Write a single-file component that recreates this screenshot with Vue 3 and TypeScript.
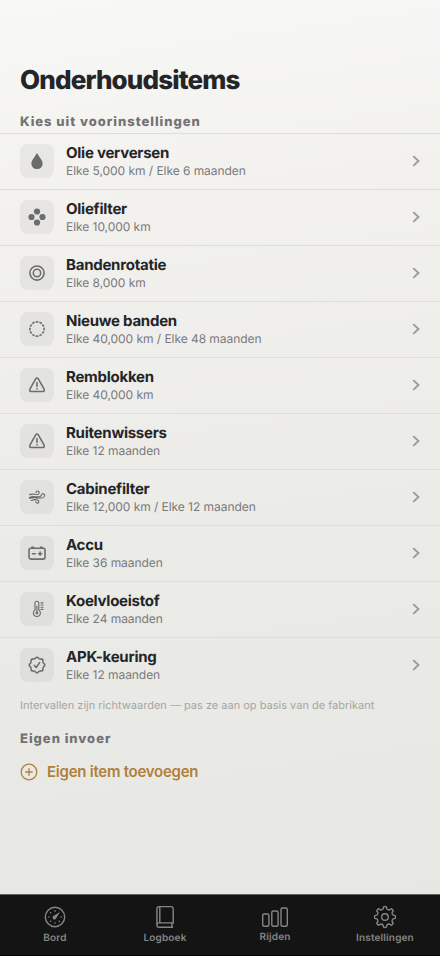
<script setup lang="ts">
interface Item {
  icon: string
  name: string
  interval: string
}

const items: Item[] = [
  { icon: 'drop', name: 'Olie verversen', interval: 'Elke 5,000 km / Elke 6 maanden' },
  { icon: 'filter', name: 'Oliefilter', interval: 'Elke 10,000 km' },
  { icon: 'rotate', name: 'Bandenrotatie', interval: 'Elke 8,000 km' },
  { icon: 'tire', name: 'Nieuwe banden', interval: 'Elke 40,000 km / Elke 48 maanden' },
  { icon: 'warn', name: 'Remblokken', interval: 'Elke 40,000 km' },
  { icon: 'warn', name: 'Ruitenwissers', interval: 'Elke 12 maanden' },
  { icon: 'wind', name: 'Cabinefilter', interval: 'Elke 12,000 km / Elke 12 maanden' },
  { icon: 'battery', name: 'Accu', interval: 'Elke 36 maanden' },
  { icon: 'thermo', name: 'Koelvloeistof', interval: 'Elke 24 maanden' },
  { icon: 'seal', name: 'APK-keuring', interval: 'Elke 12 maanden' },
]

const tabs = [
  { icon: 'gauge', label: 'Bord' },
  { icon: 'book', label: 'Logboek' },
  { icon: 'bars', label: 'Rijden' },
  { icon: 'gear', label: 'Instellingen' },
]

const point = (c: number, r: number, deg: number): string => {
  const a = ((deg - 90) * Math.PI) / 180
  return `${(c + r * Math.cos(a)).toFixed(2)} ${(c + r * Math.sin(a)).toFixed(2)}`
}

const gearPath = (): string => {
  let d = ''
  for (let i = 0; i < 8; i++) {
    const m = i * 45
    d += `${i ? 'L' : 'M'}${point(12, 8.4, m - 12.5)} L${point(12, 10.3, m - 8)} Q${point(12, 10.8, m)} ${point(12, 10.3, m + 8)} L${point(12, 8.4, m + 12.5)} Q${point(12, 7.5, m + 22.5)} ${point(12, 8.4, m + 32.5)} `
  }
  return d + 'Z'
}

const sealPath = (): string => {
  let d = `M${point(10, 6.6, -22.5)}`
  for (let i = 0; i < 8; i++) {
    const m = i * 45
    d += ` Q${point(10, 6.7, m - 14)} ${point(10, 7.6, m - 6)} Q${point(10, 8.1, m)} ${point(10, 7.6, m + 6)} Q${point(10, 6.7, m + 14)} ${point(10, 6.6, m + 22.5)}`
  }
  return d + 'Z'
}

const gear = gearPath()
const seal = sealPath()
const dots = [-135, -90, -45, 0, 90, 135, 180].map((deg) => {
  const a = ((deg - 90) * Math.PI) / 180
  return { x: 12 + 6.1 * Math.cos(a), y: 12 + 6.1 * Math.sin(a) }
})
</script>

<template>
  <div class="screen">
    <main class="content">
      <h1 class="title">Onderhoudsitems</h1>
      <h2 class="section">Kies uit voorinstellingen</h2>
      <ul class="list">
        <li v-for="item in items" :key="item.name" class="row">
          <span class="tile">
            <svg class="glyph" viewBox="0 0 20 20">
              <path v-if="item.icon === 'drop'" class="solid" d="M10 2.2C9.7 2.2 9.5 2.5 9.3 2.9C7.6 6.4 4.4 9 4.4 12.4C4.4 15.8 6.8 18 10 18S15.6 15.8 15.6 12.4C15.6 9 12.4 6.4 10.7 2.9C10.5 2.5 10.3 2.2 10 2.2Z" />
              <g v-else-if="item.icon === 'filter'" class="solid">
                <circle cx="10" cy="4.5" r="3.1" />
                <circle cx="4.5" cy="10" r="3.1" />
                <circle cx="15.5" cy="10" r="3.1" />
                <circle cx="10" cy="15.5" r="3.1" />
              </g>
              <g v-else-if="item.icon === 'rotate'">
                <circle cx="10" cy="10" r="7.1" />
                <circle cx="10" cy="10" r="3.7" />
              </g>
              <circle v-else-if="item.icon === 'tire'" class="dashed" cx="10" cy="10" r="7.1" pathLength="120" />
              <g v-else-if="item.icon === 'warn'">
                <path d="M8.8 3.7Q10 2.1 11.2 3.7L17.1 14.2Q17.9 16.3 15.8 16.5H4.2Q2.1 16.3 2.9 14.2Z" />
                <path d="M10 7.5V11.4" />
                <circle class="solid" cx="10" cy="13.8" r="0.9" />
              </g>
              <g v-else-if="item.icon === 'wind'" class="thin">
                <path d="M2.6 7.6C5.8 6.3 7.9 7.6 10.2 7.5C12.7 7.3 12.8 4 10.6 4Q9.1 4 9 5.5" />
                <path d="M2.4 10.4C6.5 8.5 9 10.4 12.8 9.8C14.8 9.4 14 6.4 16 6.7C18.6 7.1 18 11 14.8 11C10 11.3 7 10.1 2.4 11.3" />
                <path d="M4.2 13.5C7.4 12.3 9.8 12.5 11 13.2C12.8 14.5 11.3 16.8 9.7 16Q8.9 15.6 8.8 14.7" />
              </g>
              <g v-else-if="item.icon === 'battery'">
                <rect x="2" y="5.3" width="16" height="10.8" rx="1.8" />
                <path d="M4.8 4.2H6.5M13.5 4.2H15.2M5.5 10.7H8.3M11.5 10.7H14.7M13.1 9.1V12.3" />
              </g>
              <g v-else-if="item.icon === 'thermo'" class="thin">
                <path d="M8 11.1V4.1A1.9 1.9 0 0 1 11.8 4.1V11.1A3.5 3.5 0 1 1 8 11.1Z" />
                <path d="M9.9 7V13" />
                <circle class="solid" cx="9.9" cy="14" r="1.4" />
                <path d="M14 3.8H16M14 6H16M14 8.2H16M14 10.4H16" />
              </g>
              <g v-else>
                <path :d="seal" />
                <path d="M7.4 10.4L9.2 12.5L12.6 7.6" />
              </g>
            </svg>
          </span>
          <span class="text">
            <span class="name">{{ item.name }}</span>
            <span class="interval">{{ item.interval }}</span>
          </span>
          <svg class="chevron" viewBox="0 0 8 12"><path d="M1.3 1.1L6.5 6L1.3 10.9" /></svg>
        </li>
      </ul>
      <p class="note">Intervallen zijn richtwaarden — pas ze aan op basis van de fabrikant</p>
      <h2 class="section own">Eigen invoer</h2>
      <button class="add" type="button">
        <svg class="plus" viewBox="0 0 18 18">
          <circle cx="9" cy="9" r="7.8" />
          <path d="M9 5.7V12.3M5.7 9H12.3" />
        </svg>
        <span>Eigen item toevoegen</span>
      </button>
    </main>
    <nav class="tabs">
      <div v-for="tab in tabs" :key="tab.label" class="tab" :class="tab.icon">
        <svg class="tabicon" viewBox="0 0 28 24">
          <g v-if="tab.icon === 'gauge'" transform="translate(2 0)">
            <circle cx="12" cy="12" r="9.7" />
            <circle v-for="(dot, i) in dots" :key="i" class="fill" :cx="dot.x" :cy="dot.y" r="0.8" />
            <path class="fill" d="M17 7L13.2 13.3A1.9 1.9 0 1 1 10.7 10.8Z" />
          </g>
          <g v-else-if="tab.icon === 'book'">
            <path d="M22.2 18.2V3.8Q22.2 1.6 20 1.6H8.2Q5.9 1.6 5.9 3.9V19.9Q5.9 22.2 8.2 22.2H21.5M22.2 17.9H8Q5.9 17.9 5.9 20M8.8 2V17.5M20.9 18.2V21.8" />
          </g>
          <g v-else-if="tab.icon === 'bars'">
            <rect x="1.7" y="9" width="6.2" height="12.2" rx="1.5" />
            <rect x="10.8" y="6" width="6.3" height="15.2" rx="1.5" />
            <rect x="20" y="3" width="6.3" height="18.2" rx="1.5" />
          </g>
          <g v-else transform="translate(2 0)">
            <path :d="gear" />
            <circle cx="12" cy="12" r="3.3" />
          </g>
        </svg>
        <span class="label">{{ tab.label }}</span>
      </div>
    </nav>
  </div>
</template>

<style>
body {
  margin: 0;
}
</style>

<style scoped>
.screen {
  box-sizing: border-box;
  width: 440px;
  height: 956px;
  display: flex;
  flex-direction: column;
  overflow: hidden;
  background: linear-gradient(172deg, #f8f8f6 0%, #f2f1ee 22%, #ebebe7 55%, #e6e7e2 100%);
  font-family: Inter, "Liberation Sans", sans-serif;
  text-rendering: geometricPrecision;
  color: #242528;
}
.content {
  flex: 1;
  padding-top: 63px;
}
.title {
  margin: 0;
  padding: 0 20px;
  font-size: 26px;
  line-height: 36px;
  font-weight: 800;
  letter-spacing: -0.85px;
}
.section {
  margin: 0;
  padding: 13px 20px 0;
  height: 21px;
  line-height: 20px;
  font-size: 13px;
  font-weight: 800;
  letter-spacing: 0.98px;
  color: #727274;
}
.list {
  margin: 0;
  padding: 0;
  list-style: none;
}
.row {
  box-sizing: border-box;
  height: 56px;
  display: flex;
  align-items: center;
  padding: 0 20px 1px;
  border-top: 1px solid #dededa;
}
.tile {
  width: 34px;
  height: 34px;
  flex: none;
  display: grid;
  place-items: center;
  border-radius: 8px;
  background: rgba(50, 50, 50, 0.06);
}
.glyph {
  width: 20px;
  height: 20px;
  fill: none;
  stroke: #6c6c6c;
  stroke-width: 1.55;
  stroke-linecap: round;
  stroke-linejoin: round;
}
.dashed {
  stroke-width: 1.6;
  stroke-linecap: butt;
  stroke-dasharray: 7 3;
  stroke-dashoffset: 3.5;
}
.thin {
  stroke-width: 1.15;
}
.solid {
  fill: #6c6c6c;
  stroke: none;
}
.text {
  flex: 1;
  margin-left: 12px;
  display: flex;
  flex-direction: column;
}
.name {
  font-size: 15px;
  line-height: 18px;
  font-weight: 680;
  letter-spacing: -0.25px;
}
.interval {
  font-size: 12px;
  line-height: 17px;
  letter-spacing: -0.05px;
  color: #79797b;
}
.chevron {
  width: 8px;
  height: 12px;
  fill: none;
  stroke: #9b9b9a;
  stroke-width: 1.9;
}
.note {
  margin: 0;
  padding: 4px 20px 0;
  font-size: 11px;
  line-height: 17px;
  color: #a5a5a4;
}
.own {
  padding-top: 15px;
}
.add {
  display: flex;
  align-items: center;
  gap: 9px;
  margin: 12px 0 0;
  padding: 0 20px;
  border: 0;
  background: none;
  font-family: inherit;
  font-size: 15px;
  line-height: 20px;
  font-weight: 640;
  letter-spacing: -0.25px;
  color: #b07f3b;
}
.plus {
  width: 18px;
  height: 18px;
  fill: none;
  stroke: currentColor;
  stroke-width: 1.3;
  stroke-linecap: round;
}
.tabs {
  box-sizing: border-box;
  height: 62px;
  flex: none;
  display: grid;
  grid-template-columns: repeat(4, 1fr);
  padding-top: 10px;
  border-top: 1px solid #60605e;
  border-bottom: 1px solid #050505;
  background: #141414;
  color: #858585;
}
.tab {
  display: flex;
  flex-direction: column;
  align-items: center;
}
.tabicon {
  width: 28px;
  height: 24px;
  fill: none;
  stroke: currentColor;
  stroke-width: 1.4;
  stroke-linecap: round;
  stroke-linejoin: round;
}
.fill {
  fill: currentColor;
  stroke: none;
}
.label {
  margin-top: 2px;
  font-size: 10px;
  line-height: 14px;
  font-weight: 600;
  letter-spacing: 0.15px;
}
.bars .label {
  margin-top: 1px;
}
</style>
